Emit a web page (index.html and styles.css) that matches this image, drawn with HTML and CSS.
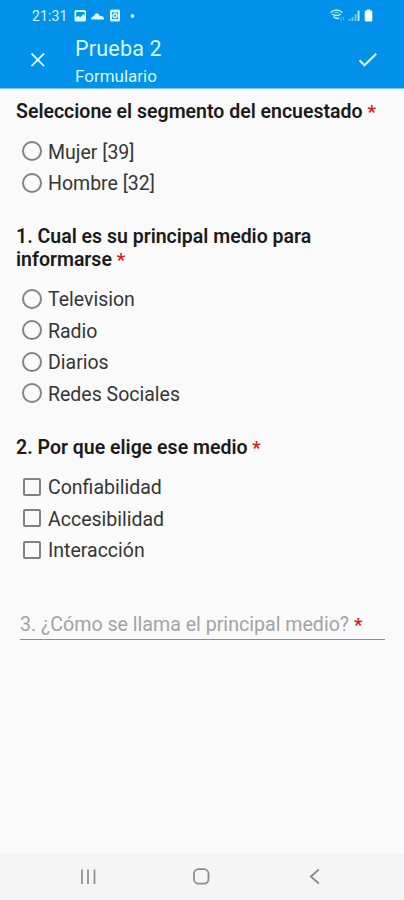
FILE: index.html
```
<!DOCTYPE html>
<html lang="es">
<head>
<meta charset="utf-8">
<title>Prueba 2</title>
<link rel="stylesheet" href="styles.css">
</head>
<body>
<header class="header">
  <div class="status">
    <span class="clock">21:31</span>
    <svg class="notifications" width="64" height="16" viewBox="0 0 64 16" fill="#d9f5ff">
      <path fill-rule="evenodd" d="M2 2h8.500q1.500 0 1.500 1.500v8.500q0 1.500-1.500 1.500H2Q.5 13.500 .5 12v-8.500Q.5 2 2 2zM2.200 9.200l2-1.500 2 1.600 3-3 1.300 1V4H2.200z"/>
      <path d="M17 11.500q0-3 3-3.500 1.500-4.500 5-1.500 .5 1.500 2 1.500 3 .3 3.200 3.500z"/>
      <path fill-rule="evenodd" d="M37.500 1.500h7q1.500 0 1.500 1.500v9q0 1.500-1.500 1.500h-7Q36 13.500 36 12V3Q36 1.500 37.500 1.500zM38 4.500v6.500h6V4.500z"/>
      <path fill-rule="evenodd" d="M41 5a2.700 2.700 0 1 1 0 5.400a2.700 2.700 0 1 1 0-5.400zM41 6.700a1 1 0 1 0 0 2a1 1 0 1 0 0-2z"/>
      <circle cx="58.500" cy="8" r="1.900"/>
    </svg>
    <svg class="signals" width="46" height="16" viewBox="0 0 46 16" fill="none" stroke="#b8ecff">
      <path d="M1.500 4.500Q7.500 -.5 13.500 4.500M3 6Q7.500 9 12 6M4.500 8.500Q7.500 11.500 10 10" stroke-width="1.500"/>
      <path d="M5.500 5Q7.500 3.500 9.500 5" stroke-width="1"/>
      <path d="M12 9v4M14.500 9v3" stroke-width="1" opacity=".5"/>
      <path d="M20.500 13v-2M23.500 13V9M26.500 13V6" stroke-width="1.900" opacity=".6"/>
      <path d="M29.500 13V2.500" stroke-width="1.900"/>
      <path d="M37 2.500h1v-1h3v1h1q1.300 0 1.300 1.300v8.500q0 1.200-1.300 1.200h-5q-1.300 0-1.300-1.200v-8.500Q35.700 2.500 37 2.500z" fill="#fff" stroke="none"/>
    </svg>
  </div>
  <div class="bar">
    <svg class="close" width="16" height="16" viewBox="0 0 16 16" fill="none" stroke="#d9f7ff" stroke-width="1.800"><path d="M1.500 1.500l12.600 12.600M14.100 1.500L1.500 14.100"/></svg>
    <div class="titles">
      <h1 class="title">Prueba 2</h1>
      <p class="subtitle">Formulario</p>
    </div>
    <svg class="check" width="20" height="16" viewBox="0 0 20 16" fill="none" stroke="#d9f7ff" stroke-width="2.100"><path d="M1.500 8.200l5 5L18.200 1.700"/></svg>
  </div>
</header>
<main class="form">
  <section class="question">
    <h2 class="label">Seleccione el segmento del encuestado <span class="required">*</span></h2>
    <ul class="options">
      <li class="option"><i class="radio"></i>Mujer [39]</li>
      <li class="option"><i class="radio"></i>Hombre [32]</li>
    </ul>
  </section>
  <section class="question">
    <h2 class="label">1. Cual es su principal medio para<br>informarse <span class="required">*</span></h2>
    <ul class="options">
      <li class="option"><i class="radio"></i>Television</li>
      <li class="option"><i class="radio"></i>Radio</li>
      <li class="option"><i class="radio"></i>Diarios</li>
      <li class="option"><i class="radio"></i>Redes Sociales</li>
    </ul>
  </section>
  <section class="question">
    <h2 class="label">2. Por que elige ese medio <span class="required">*</span></h2>
    <ul class="options">
      <li class="option"><i class="box"></i>Confiabilidad</li>
      <li class="option"><i class="box"></i>Accesibilidad</li>
      <li class="option"><i class="box"></i>Interacción</li>
    </ul>
  </section>
  <div class="field">3. ¿Cómo se llama el principal medio? <span class="required">*</span></div>
</main>
<nav class="nav">
  <svg width="18" height="18" viewBox="0 0 18 18" fill="none" stroke="#8b8b8b" stroke-width="1.700"><path d="M3 1.500v14.500M9 1.500v14.500M15.500 1.500v14.500"/></svg>
  <svg width="18" height="18" viewBox="0 0 18 18" fill="none" stroke="#8b8b8b" stroke-width="1.800"><rect x="1" y="1.200" width="14.500" height="14.500" rx="4.500"/></svg>
  <svg width="18" height="18" viewBox="0 0 18 18" fill="none" stroke="#8b8b8b" stroke-width="1.800"><path d="M12.800 1.500L4.800 8.500l8 7"/></svg>
</nav>
</body>
</html>
```
FILE: styles.css
```
* { box-sizing: border-box; }
body {
  margin: 0;
  height: 900px;
  display: flex;
  flex-direction: column;
  background: #fafafa;
  color: #353535;
  font-family: Roboto, sans-serif;
}
h1, h2, p, ul { margin: 0; padding: 0; font-weight: 400; }
ul { list-style: none; }
svg { display: block; flex: none; }
.header {
  height: 89px;
  flex: none;
  background: #0091ea;
  border-bottom: 1px solid #72c5f2;
  color: #d9f7ff;
}
.status {
  height: 31px;
  padding: 0 29px 0 32px;
  display: flex;
  align-items: center;
}
.clock { width: 42px; font-size: 14px; letter-spacing: 0.1px; }
.signals { margin-left: auto; }
.bar { height: 57px; padding: 0 26px 0 30px; display: flex; }
.close { margin-top: 21px; }
.titles { margin-left: 29px; }
.title { margin-top: 4px; font-size: 21.5px; line-height: 27px; letter-spacing: 0.2px; }
.subtitle { margin-top: 4px; font-size: 17px; line-height: 21px; }
.check { margin: 21px 0 0 auto; }
.form { flex: 1; padding: 12px 19px 0 16px; }
.question { margin-bottom: 26px; }
.label {
  font-size: 19.5px;
  line-height: 22.5px;
  font-weight: 600;
  color: #1b1b1b;
  white-space: nowrap;
}
.required { color: #d3201f; font-weight: 700; font-size: 18.5px; line-height: 1; }
.options { margin-top: 13.5px; }
.option {
  height: 31.5px;
  padding-left: 6px;
  display: flex;
  align-items: center;
  font-size: 19.5px;
  line-height: 24px;
}
.radio, .box { flex: none; border: 2px solid #828282; }
.radio { width: 20px; height: 20px; margin: 0 6px 3px 0; border-radius: 50%; }
.box { width: 18px; height: 18px; margin: 0 7px 3px 1px; border-radius: 2px; }
.field {
  height: 30px;
  margin: 43px 0 0 4px;
  font-size: 19.6px;
  line-height: 29px;
  color: #a3a3a3;
  border-bottom: 1px solid #8c8c8c;
  white-space: nowrap;
}
.nav {
  height: 47px;
  flex: none;
  padding: 0 80px 0 79px;
  display: flex;
  align-items: center;
  justify-content: space-between;
  background: #f5f5f5;
}
```
